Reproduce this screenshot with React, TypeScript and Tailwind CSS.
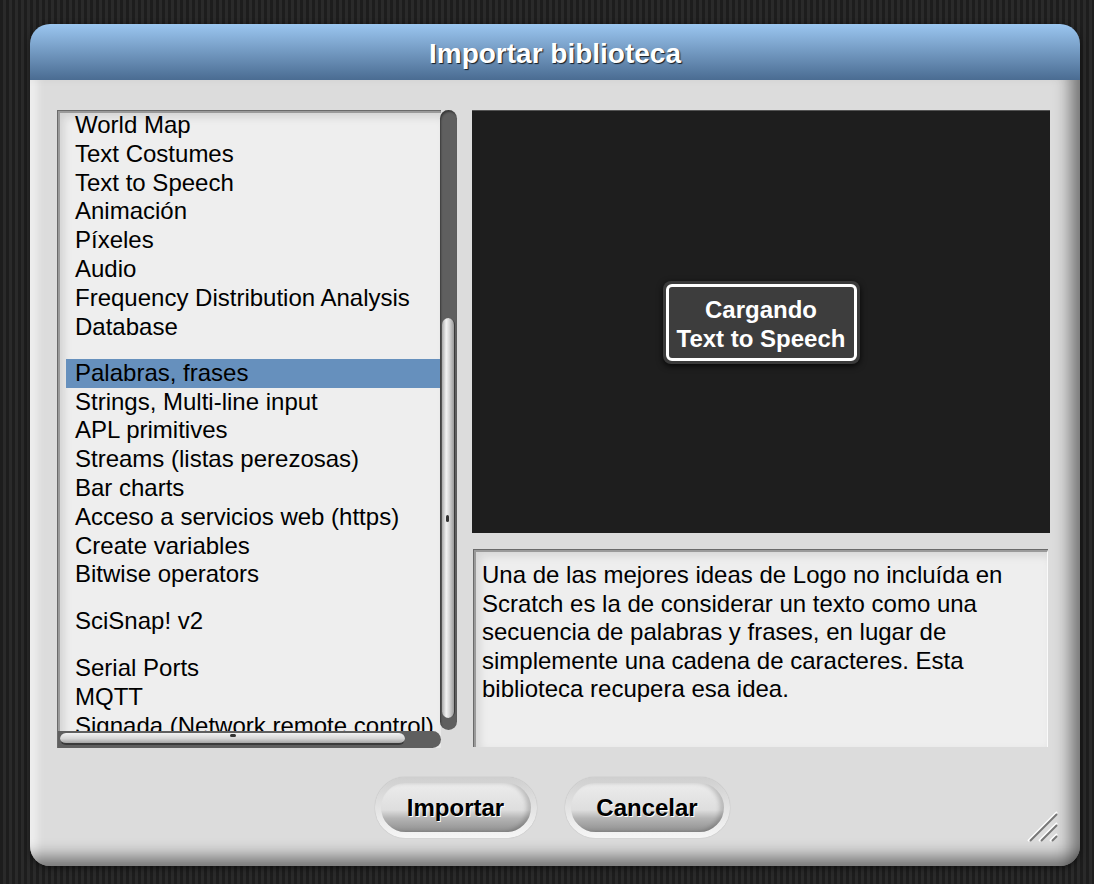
import React from "react";

const group1 = ["World Map", "Text Costumes", "Text to Speech", "Animación", "Píxeles", "Audio", "Frequency Distribution Analysis", "Database"];
const group2 = ["Palabras, frases", "Strings, Multi-line input", "APL primitives", "Streams (listas perezosas)", "Bar charts", "Acceso a servicios web (https)", "Create variables", "Bitwise operators"];
const group3 = ["SciSnap! v2"];
const group4 = ["Serial Ports", "MQTT", "Signada (Network remote control)"];

function Item({ label, selected }: { label: string; selected?: boolean }) {
  return (
    <div
      className={
        "ml-[6px] h-[28.8px] pl-[9px] leading-[28.8px] whitespace-nowrap text-[24px] text-black " +
        (selected ? "bg-[#6690bd]" : "")
      }
    >
      {label}
    </div>
  );
}

function Button({ label, w }: { label: string; w: string }) {
  return (
    <div className={"h-[61px] rounded-full p-[6px] bg-[linear-gradient(to_bottom,#cfcfcf,#f6f6f6)] shadow-[0_0_1px_rgba(0,0,0,0.3)] " + w}>
      <div className="relative flex h-full w-full items-center justify-center overflow-hidden rounded-full bg-[linear-gradient(to_bottom,#ececec_0%,#dedede_55%,#b4b4b4_72%,#8f8f8f_100%)] shadow-[inset_-4px_0_4px_rgba(0,0,0,0.18)]">
        <span className="text-[24px] font-bold text-black [text-shadow:1px_1px_0_#fff]">{label}</span>
      </div>
    </div>
  );
}

export default function App() {
  return (
    <div className="w-[1094px] h-[884px] overflow-hidden pl-[30px] pt-[24px] bg-[repeating-linear-gradient(90deg,#1d1d1d_0px,#1d1d1d_3px,#2a2a2a_3px,#2a2a2a_6px)] font-['Liberation_Sans',Arial,sans-serif]">
      <div className="flex w-[1050px] h-[842px] flex-col overflow-hidden rounded-[20px] shadow-[0_2px_6px_rgba(0,0,0,0.5)]">
        {/* Title */}
        <div className="flex h-[56px] shrink-0 items-center justify-center pt-[3px] bg-[linear-gradient(to_bottom,#9bc6f0,#4a6c92)]">
          <span className="text-[28px] font-bold text-white [text-shadow:1px_1px_1px_rgba(0,0,0,0.8)]">Importar biblioteca</span>
        </div>
        {/* Body */}
        <div className="relative flex flex-1 flex-col bg-[#dcdcdc] pt-[30px] pl-[27px] pr-[30px] shadow-[inset_-22px_0_16px_-12px_rgba(0,0,0,0.45),inset_0_-22px_16px_-12px_rgba(0,0,0,0.45),inset_14px_0_10px_-8px_rgba(255,255,255,0.7)]">
          <div className="flex h-[638px] gap-[15px]">
            {/* Left list */}
            <div className="relative h-full w-[400px] shrink-0">
              <div className="h-full w-[384px] border-l border-t border-[#6a6a6a]">
                <div className="h-full w-full overflow-hidden border-l-2 border-t-2 border-[#9a9a9a] bg-[#eeeeee] shadow-[inset_4px_4px_8px_rgba(0,0,0,0.12)]">
                  <div className="-mt-[2px]">
                    {group1.map((l) => (
                      <Item key={l} label={l} />
                    ))}
                    <div className="h-[17.5px]" />
                    {group2.map((l, i) => (
                      <Item key={l} label={l} selected={i === 0} />
                    ))}
                    <div className="h-[18px]" />
                    {group3.map((l) => (
                      <Item key={l} label={l} />
                    ))}
                    <div className="h-[18px]" />
                    {group4.map((l) => (
                      <Item key={l} label={l} />
                    ))}
                  </div>
                </div>
              </div>
              {/* vertical scrollbar */}
              <div className="absolute left-[383px] top-0 h-[620px] w-[17px] rounded-full bg-[#5f5f5f] shadow-[inset_1px_2px_2px_rgba(0,0,0,0.4)]">
                <div className="absolute left-[2px] top-[208px] h-[400px] w-[13px] rounded-full bg-[linear-gradient(to_right,#a9a9a9,#f2f2f2_35%,#d8d8d8_60%,#9a9a9a)] border-r border-[#3a3a3a]" />
                <div className="absolute left-[6px] top-[405px] h-[7px] w-[3px] rounded-full bg-[#333]" />
              </div>
              {/* horizontal scrollbar */}
              <div className="absolute left-[1px] bottom-0 h-[17px] w-[383px] rounded-r-full bg-[#5f5f5f]">
                <div className="absolute left-[2px] top-[2px] h-[12px] w-[345px] rounded-full bg-[linear-gradient(to_bottom,#f2f2f2,#d6d6d6_55%,#a5a5a5)] border-b-2 border-[#3a3a3a]" />
                <div className="absolute left-[172px] top-[3px] h-[3px] w-[6px] rounded-full bg-[#333]" />
              </div>
            </div>
            {/* Right column */}
            <div className="flex w-[580px] flex-col gap-[16px]">
              <div className="flex h-[423px] items-center justify-center border-t border-[#555] bg-[#1e1e1e]">
                <div className="rounded-[8px] bg-[#3a3a3a] p-[3px] shadow-[0_2px_6px_rgba(0,0,0,0.8)]">
                  <div className="flex w-[191px] flex-col items-center rounded-[6px] border-[3px] border-white bg-[#3d3d3d] pt-[8px] pb-[5px] text-[24px] font-bold leading-[29px] text-white">
                    <span>Cargando</span>
                    <span>Text to Speech</span>
                  </div>
                </div>
              </div>
              <div className="ml-[1px] mr-[2px] h-[198px] border-l border-t border-[#6a6a6a]">
                <div className="h-full w-full border-l-2 border-t-2 border-[#9a9a9a] bg-[#eeeeee] pl-[6px] pt-[9px] pr-[10px] text-[24px] leading-[28.6px] text-black shadow-[inset_4px_4px_8px_rgba(0,0,0,0.1)] border-r border-r-[#fafafa]">
                  Una de las mejores ideas de Logo no incluída en Scratch es la de considerar un texto como una secuencia de palabras y frases, en lugar de simplemente una cadena de caracteres. Esta biblioteca recupera esa idea.
                </div>
              </div>
            </div>
          </div>
          {/* Buttons */}
          <div className="mt-[29px] flex justify-center gap-[28px] pr-[3px]">
            <Button label="Importar" w="w-[162px]" />
            <Button label="Cancelar" w="w-[165px]" />
          </div>
          {/* Resize handle */}
          <svg className="absolute right-[22px] bottom-[24px]" width="31" height="31" viewBox="0 0 31 31">
            <g strokeWidth="2">
              <line x1="1" y1="30" x2="30" y2="1" stroke="#ffffff" />
              <line x1="3" y1="30" x2="30" y2="3" stroke="#777777" />
              <line x1="12" y1="30" x2="30" y2="12" stroke="#ffffff" />
              <line x1="14" y1="30" x2="30" y2="14" stroke="#777777" />
              <line x1="23" y1="30" x2="30" y2="23" stroke="#ffffff" />
              <line x1="25" y1="30" x2="30" y2="25" stroke="#777777" />
            </g>
          </svg>
        </div>
      </div>
    </div>
  );
}
